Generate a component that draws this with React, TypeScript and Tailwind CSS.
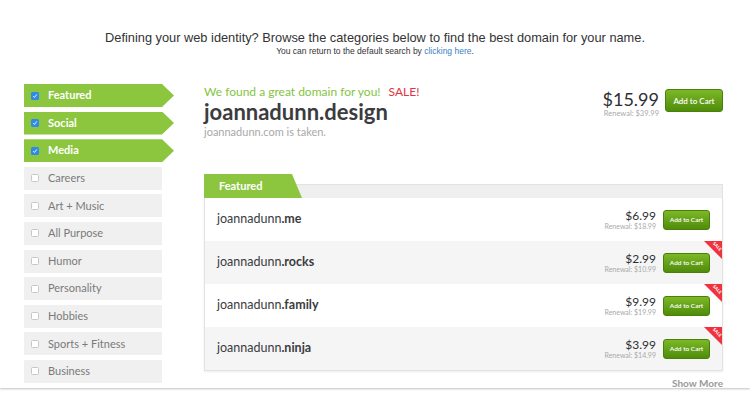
import React from 'react';

interface Category {
    name: string;
    checked: boolean;
}

interface Domain {
    name: string;
    tld: string;
    price: string;
    renewal: string;
    sale: boolean;
}

// the last one sits under the fold, only its top edge shows
const categories: Category[] = [
    { name: 'Featured', checked: true },
    { name: 'Social', checked: true },
    { name: 'Media', checked: true },
    { name: 'Careers', checked: false },
    { name: 'Art + Music', checked: false },
    { name: 'All Purpose', checked: false },
    { name: 'Humor', checked: false },
    { name: 'Personality', checked: false },
    { name: 'Hobbies', checked: false },
    { name: 'Sports + Fitness', checked: false },
    { name: 'Business', checked: false },
    { name: '', checked: false },
];

const domains: Domain[] = [
    { name: 'joannadunn', tld: '.me', price: '$6.99', renewal: 'Renewal: $18.99', sale: false },
    { name: 'joannadunn', tld: '.rocks', price: '$2.99', renewal: 'Renewal: $10.99', sale: true },
    { name: 'joannadunn', tld: '.family', price: '$9.99', renewal: 'Renewal: $19.99', sale: true },
    { name: 'joannadunn', tld: '.ninja', price: '$3.99', renewal: 'Renewal: $14.99', sale: true },
];

const CartButton = ({ small }: { small?: boolean }) => (
    <button
        className={
            'rounded-[3px] border border-[#4a8008] bg-gradient-to-b from-[#7cb826] to-[#4f8c0a] text-white font-semibold ' +
            (small ? 'h-[20px] w-[47px] text-[6.5px]' : 'h-[23px] w-[58px] text-[8px]')
        }
    >
        Add to Cart
    </button>
);

const SideItem = ({ item }: { item: Category }) => {
    if (item.checked) {
        return (
            <div className="h-[23px] w-[150px] shrink-0 bg-[#8cc63f] flex items-center pl-[7px] [clip-path:polygon(0_0,calc(100%-12px)_0,100%_50%,calc(100%-12px)_100%,0_100%)]">
                <span className="w-[8px] h-[8px] rounded-[1.5px] bg-[#2f8ae8] flex items-center justify-center">
                    <svg width="6" height="6" viewBox="0 0 6 6">
                        <path d="M1.2 3.2 L2.5 4.4 L4.8 1.4" stroke="white" strokeWidth="0.9" fill="none" />
                    </svg>
                </span>
                <span className="ml-[9px] text-[11px] font-bold text-white">{item.name}</span>
            </div>
        );
    }
    return (
        <div className="h-[23px] w-[138px] shrink-0 bg-[#f0f0f0] flex items-center pl-[7px]">
            {item.name && (
                <>
                    <span className="w-[8px] h-[8px] rounded-[1.5px] border border-[#c8c8c8] bg-white" />
                    <span className="ml-[9px] text-[11px] text-[#7a7a7a]">{item.name}</span>
                </>
            )}
        </div>
    );
};

const App: React.FC = () => {
    return (
        <div className="w-[750px] h-[410px] bg-white overflow-hidden font-['Lato',sans-serif]">
            <div className="h-[388px] overflow-hidden shadow-[0_1px_2px_rgba(0,0,0,0.25)]">
                <div className="pt-[29px] text-center">
                    <p className="text-[12.8px] text-[#333] font-['Liberation_Sans',sans-serif] leading-[17px]">
                        Defining your web identity? Browse the categories below to find the best domain for your name.
                    </p>
                    <p className="text-[8.5px] text-[#333] font-['Liberation_Sans',sans-serif] leading-[11px]">
                        You can return to the default search by <span className="text-[#3b7fc4]">clicking here</span>.
                    </p>
                </div>

                <div className="flex pl-[24px] pt-[27px]">
                    <div className="w-[150px] flex flex-col gap-[4.6px]">
                        {categories.map((item, index) => (
                            <SideItem key={index} item={item} />
                        ))}
                    </div>

                    <div className="ml-[30px] w-[519px]">
                        <div className="flex justify-between">
                            <div>
                                <div className="text-[12px] leading-[14px] pt-[1px] text-[#84c441]">
                                    We found a great domain for you!
                                    <span className="ml-[8px] text-[#e0343f]">SALE!</span>
                                </div>
                                <div className="text-[22px] leading-[24px] font-bold text-[#3b3b40] mt-[1px]">joannadunn.design</div>
                                <div className="text-[11px] leading-[16px] text-[#a9a9a9]">joannadunn.com is taken.</div>
                            </div>
                            <div className="flex items-start pt-[5px]">
                                <div className="text-right mr-[6px]">
                                    <div className="text-[18px] leading-[20px] text-[#2e2e33]">$15.99</div>
                                    <div className="text-[7.5px] leading-[10px] text-[#a9a9a9]">Renewal: $39.99</div>
                                </div>
                                <CartButton />
                            </div>
                        </div>

                        <div className="mt-[34px]">
                            <div className="relative h-[24px]">
                                <div className="absolute left-0 right-0 bottom-0 h-[14px] bg-[#efefef] border-t border-r border-[#e2e2e2]" />
                                <div className="absolute left-0 top-0 h-[24px] w-[98px] bg-[#8cc63f] pl-[15px] flex items-center text-[11px] font-bold text-white [clip-path:polygon(0_0,88px_0,98px_100%,0_100%)]">
                                    Featured
                                </div>
                            </div>
                            <div className="border border-t-0 border-[#e2e2e2] shadow-[0_1px_2px_rgba(0,0,0,0.08)]">
                                {domains.map((d, index) => (
                                    <div
                                        key={index}
                                        className={
                                            'relative h-[43px] flex items-center justify-between pl-[12px] pr-[12px] ' +
                                            (index % 2 === 1 ? 'bg-[#f5f5f5]' : 'bg-white')
                                        }
                                    >
                                        <div className="text-[12.5px] text-[#3b3b40]">
                                            {d.name}
                                            <span className="font-bold">{d.tld}</span>
                                        </div>
                                        <div className="flex items-center">
                                            <div className="text-right mr-[7px]">
                                                <div className="text-[12px] leading-[13px] text-[#2e2e33]">{d.price}</div>
                                                <div className="text-[7px] leading-[9px] text-[#a9a9a9]">{d.renewal}</div>
                                            </div>
                                            <CartButton small />
                                        </div>
                                        {d.sale && (
                                            <div className="absolute top-0 right-0 w-[18px] h-[18px] bg-[#f0323e] [clip-path:polygon(0_0,100%_0,100%_100%)]">
                                                <span className="absolute top-[3px] right-[0px] rotate-45 text-[4.5px] leading-[5px] font-bold text-white">SALE</span>
                                            </div>
                                        )}
                                    </div>
                                ))}
                            </div>
                            <div className="text-right pt-[4px] leading-[12px]">
                                <span className="text-[10px] font-bold text-[#9a9a9a] underline">Show More</span>
                            </div>
                        </div>
                    </div>
                </div>
            </div>
        </div>
    );
};

export default App;
